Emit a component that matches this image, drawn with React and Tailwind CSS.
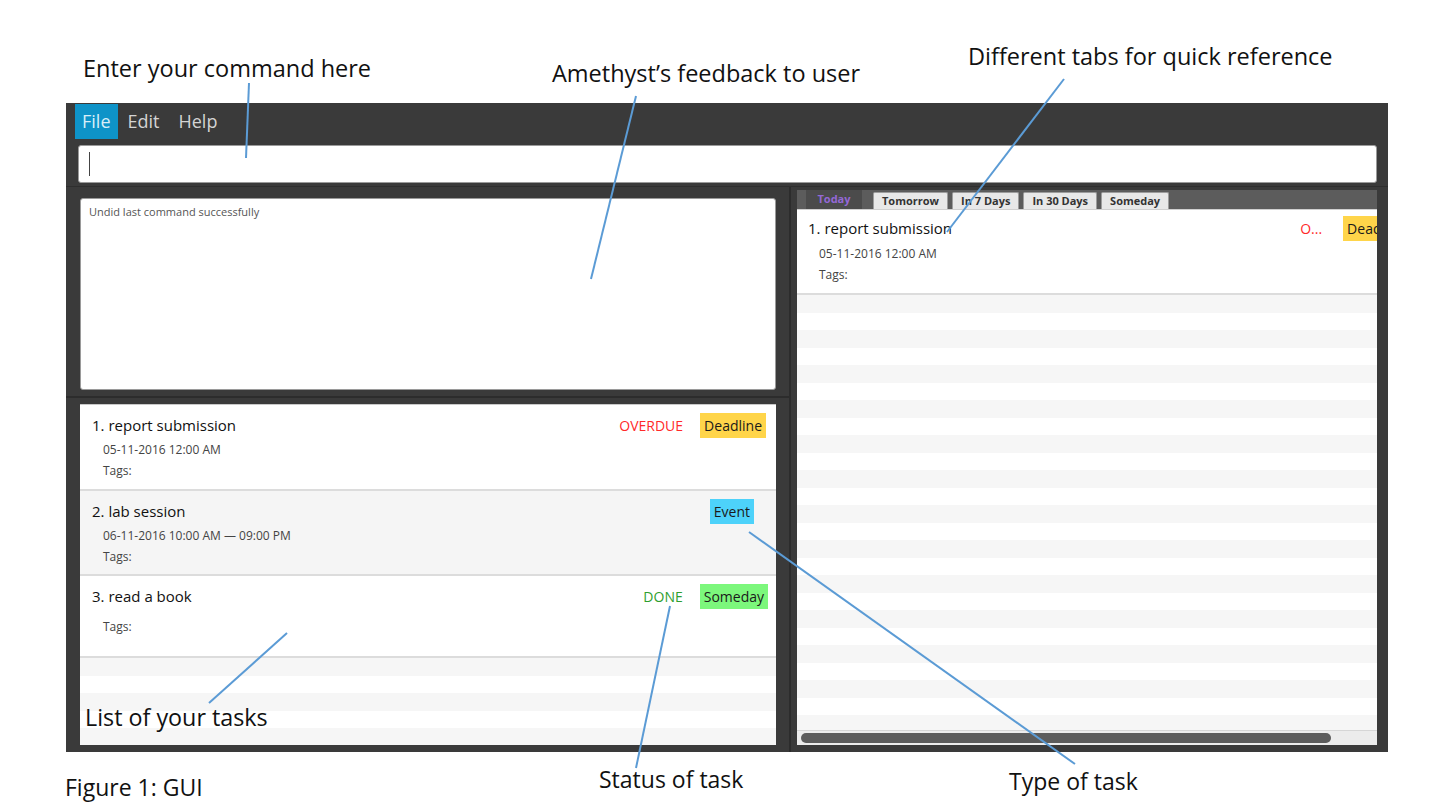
import React from "react";

const ui = { fontFamily: '"Open Sans", "Noto Sans", sans-serif' };
const note = { fontFamily: '"Open Sans", "Noto Sans", sans-serif' };

const tabs = ["Tomorrow", "In 7 Days", "In 30 Days", "Someday"];

function Stripes({ count }) {
    return (
        <div className="flex flex-col">
            {Array.from({ length: count }).map((_, i) => (
                <div key={i} className={i % 2 === 0 ? "h-[17.5px] bg-[#f6f6f6]" : "h-[17.5px] bg-white"} />
            ))}
        </div>
    );
}

function Badge({ label, color }) {
    return (
        <div className={`h-[25px] px-[4px] flex items-center text-[14px] text-[#1a1a1a] shrink-0 ${color}`}>{label}</div>
    );
}

function TaskCard({ title, date, status, statusColor, badge, badgeColor, badgeMargin, bg, height, tagsGap }) {
    return (
        <div className={`flex flex-col border-b-2 border-[#dcdcdc] pl-[12px] pt-[8px] ${bg} ${height}`}>
            <div className="flex items-center">
                <div className="flex-1 text-[15px] text-[#111]">{title}</div>
                {status && <div className={`text-[14px] mr-[17px] ${statusColor}`}>{status}</div>}
                <div className={badgeMargin}>
                    <Badge label={badge} color={badgeColor} />
                </div>
            </div>
            {date && <div className="pl-[11px] mt-[4px] h-[16px] leading-[16px] text-[12px] text-[#444]">{date}</div>}
            <div className={`pl-[11px] h-[16px] leading-[16px] text-[12px] text-[#444] ${tagsGap}`}>Tags:</div>
        </div>
    );
}

export default function App() {
    return (
        <div className="relative w-[1440px] h-[810px] bg-white overflow-hidden" style={ui}>
            <div className="pt-[103px] pl-[66px]">
                <div className="w-[1322px] h-[649px] bg-[#3a3a3a] flex flex-col">
                    {/* menu */}
                    <div className="h-[36px] flex items-stretch pl-[9px] text-[18px] text-[#d4d4d4]">
                        <div className="mt-[1px] bg-[#0e93c8] px-[7px] flex items-center text-[#d8eef8]">File</div>
                        <div className="px-[10px] flex items-center">Edit</div>
                        <div className="pl-[9px] flex items-center">Help</div>
                    </div>

                    {/* command box */}
                    <div className="h-[48px] pl-[12px] pr-[11px] pt-[6px] border-b border-[#2e2e2e]">
                        <div className="h-[38px] bg-white rounded-[3px] border border-[#9a9a9a] flex items-center pl-[10px]">
                            <div className="w-[1px] h-[24px] bg-[#444]" />
                        </div>
                    </div>

                    <div className="flex-1 flex">
                        {/* left column */}
                        <div className="w-[725px] shrink-0 flex flex-col pl-[14px] pr-[13px] pt-[11px] border-r-2 border-[#2c2c2c]">
                            <div className="h-[192px] bg-white rounded-[3px] border border-[#9a9a9a] px-[8px] pt-[5px] text-[11px] text-[#555]">
                                Undid last command successfully
                            </div>
                            <div className="h-[14px] flex items-center -mx-[14px]">
                                <div className="w-full h-[2px] bg-[#2c2c2c]" />
                            </div>
                            <div className="h-[341px] bg-white border-t border-[#c8c8c8] overflow-hidden">
                                <TaskCard
                                    title="1. report submission"
                                    date="05-11-2016 12:00 AM"
                                    status="OVERDUE"
                                    statusColor="text-[#ff2a2a]"
                                    badge="Deadline"
                                    badgeColor="bg-[#ffd54a]"
                                    badgeMargin="mr-[10px]"
                                    bg="bg-white"
                                    height="h-[86px]"
                                    tagsGap="mt-[5px]"
                                />
                                <TaskCard
                                    title="2. lab session"
                                    date="06-11-2016 10:00 AM — 09:00 PM"
                                    badge="Event"
                                    badgeColor="bg-[#4dd2fa]"
                                    badgeMargin="mr-[22px]"
                                    bg="bg-[#f5f5f5]"
                                    height="h-[85px]"
                                    tagsGap="mt-[5px]"
                                />
                                <TaskCard
                                    title="3. read a book"
                                    status="DONE"
                                    statusColor="text-[#2e9e2e]"
                                    badge="Someday"
                                    badgeColor="bg-[#7cf77c]"
                                    badgeMargin="mr-[8px]"
                                    bg="bg-white"
                                    height="h-[82px]"
                                    tagsGap="mt-[10px]"
                                />
                                <Stripes count={6} />
                            </div>
                        </div>

                        {/* right column */}
                        <div className="flex-1 min-w-0 pl-[6px] pr-[11px] pt-[3px]">
                            <div className="h-[555px] flex flex-col bg-white overflow-hidden">
                                <div className="h-[19px] bg-[#5c5c5c] flex items-end pl-[9px]">
                                    <div className="h-[19px] w-[56px] bg-[#4b4b4b] flex items-center justify-center text-[11px] font-bold text-[#9468d6] mr-[11px]">
                                        Today
                                    </div>
                                    {tabs.map((t) => (
                                        <div
                                            key={t}
                                            className="h-[17px] px-[8px] mr-[4px] bg-[#e8e8e8] border border-[#9d9d9d] border-b-0 rounded-t-[2px] flex items-center text-[11px] font-bold text-[#333]"
                                        >
                                            {t}
                                        </div>
                                    ))}
                                </div>
                                <div className="flex-1 overflow-hidden border-t border-[#d0d0d0]">
                                    <div className="h-[85px] border-b-2 border-[#dcdcdc] overflow-hidden">
                                        <div className="w-[620px] pl-[11px] pt-[6px] flex flex-col">
                                            <div className="flex items-center">
                                                <div className="flex-1 text-[15px] text-[#111]">1. report submission</div>
                                                <div className="text-[14px] text-[#ff2a2a] mr-[21px]">O...</div>
                                                <div className="mr-[8px]">
                                                    <Badge label="Deadline" color="bg-[#ffd54a]" />
                                                </div>
                                            </div>
                                            <div className="pl-[11px] mt-[5px] h-[16px] leading-[16px] text-[12px] text-[#444]">05-11-2016 12:00 AM</div>
                                            <div className="pl-[11px] mt-[5px] h-[16px] leading-[16px] text-[12px] text-[#444]">Tags:</div>
                                        </div>
                                    </div>
                                    <Stripes count={26} />
                                </div>
                                <div className="h-[15px] bg-[#ececec] border-t border-[#d6d6d6] flex items-center pl-[4px]">
                                    <div className="w-[530px] h-[10px] rounded-full bg-[#5c5c5c]" />
                                </div>
                            </div>
                        </div>
                    </div>
                </div>
            </div>

            {/* callouts */}
            <svg className="absolute inset-0 pointer-events-none" width="1440" height="810">
                <g stroke="#5b9bd5" strokeWidth="2" fill="none">
                    <line x1="249" y1="83" x2="246" y2="158" />
                    <line x1="636" y1="96" x2="591" y2="279" />
                    <line x1="1064" y1="79" x2="947" y2="232" />
                    <line x1="287" y1="633" x2="209" y2="703" />
                    <line x1="670" y1="606" x2="636" y2="768" />
                    <line x1="749" y1="532" x2="1075" y2="764" />
                </g>
            </svg>
            <div className="absolute left-[83px] top-[52px] text-[23.5px] leading-[32px] text-[#111]" style={note}>Enter your command here</div>
            <div className="absolute left-[552px] top-[57px] text-[23.5px] leading-[32px] text-[#111]" style={note}>Amethyst’s feedback to user</div>
            <div className="absolute left-[968px] top-[40px] text-[23.5px] leading-[32px] text-[#111]" style={note}>Different tabs for quick reference</div>
            <div className="absolute left-[85px] top-[701px] text-[23.3px] leading-[32px] text-[#111]" style={note}>List of your tasks</div>
            <div className="absolute left-[65px] top-[771px] text-[23px] leading-[32px] text-[#111]" style={note}>Figure 1: GUI</div>
            <div className="absolute left-[599px] top-[763px] text-[23px] leading-[32px] text-[#111]" style={note}>Status of task</div>
            <div className="absolute left-[1009px] top-[765px] text-[23px] leading-[32px] text-[#111]" style={note}>Type of task</div>
        </div>
    );
}
